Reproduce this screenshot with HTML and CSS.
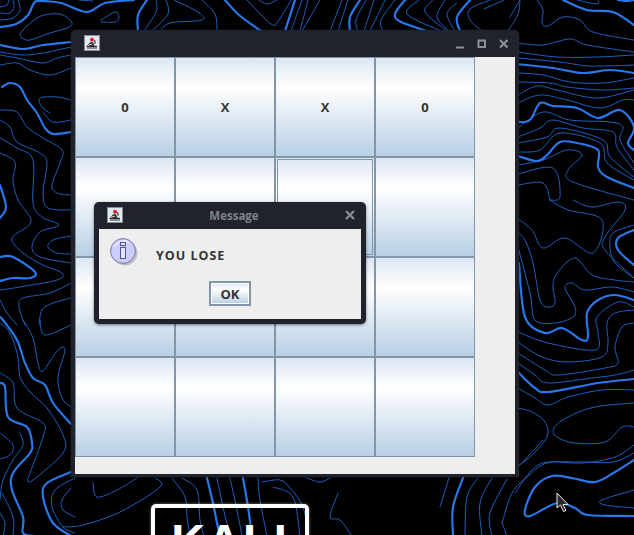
FILE: index.html
```html
<!DOCTYPE html>
<html lang="en">
<head>
    <meta charset="UTF-8">
    <meta name="viewport" content="width=device-width, initial-scale=1.0">
    <title>Tic Tac Toe</title>
    <link rel="stylesheet" href="styles.css">
</head>
<body>

<div class="desktop">
    <svg class="wallpaper" id="wallpaper" width="634" height="535" viewBox="0 0 634 535"></svg>

    <div class="kali-logo">KALI</div>

    <div class="window">
        <div class="titlebar">
            <svg class="java-icon" width="16" height="16" viewBox="0 0 16 16">
                <rect x="0.5" y="0.5" width="15" height="15" fill="#e4e9f0" stroke="#7d90a2"/>
                <path d="M2.500 11.500L6 7.500l2-.5 1.500 1 .5 2.500 3 .5v1.500H3z" fill="#2b2b2b"/>
                <path d="M9.500 4.500l2 1 .5 3-1.500.5z" fill="#666"/>
                <path d="M3 13.500h10" stroke="#8a8a8a"/>
                <path d="M4 10.500l4-1.500" stroke="#ddd"/>
                <circle cx="8" cy="4.800" r="2" fill="#e0202c"/>
            </svg>
            <div class="controls">
                <svg width="53" height="12" viewBox="0 0 53 12">
                    <path d="M0 9.500h8" stroke="#8e8f94" stroke-width="2"/>
                    <rect x="22.500" y="2.500" width="6.500" height="6.500" fill="none" stroke="#8e8f94" stroke-width="2"/>
                    <path d="M44 2l7.500 7.500M51.500 2L44 9.500" stroke="#8e8f94" stroke-width="2.200"/>
                </svg>
            </div>
        </div>
        <div class="content">
            <div class="board">
                <button class="cell">0</button>
                <button class="cell">X</button>
                <button class="cell">X</button>
                <button class="cell">0</button>
                <button class="cell"></button>
                <button class="cell"></button>
                <button class="cell focused"></button>
                <button class="cell"></button>
                <button class="cell"></button>
                <button class="cell"></button>
                <button class="cell"></button>
                <button class="cell"></button>
                <button class="cell"></button>
                <button class="cell"></button>
                <button class="cell"></button>
                <button class="cell"></button>
            </div>
        </div>
    </div>

    <div class="dialog">
        <div class="dialog-title">
            <svg class="java-icon" width="16" height="16" viewBox="0 0 16 16">
                <rect x="0.5" y="0.5" width="15" height="15" fill="#e4e9f0" stroke="#7d90a2"/>
                <path d="M2.500 11.500L6 7.500l2-.5 1.500 1 .5 2.500 3 .5v1.500H3z" fill="#2b2b2b"/>
                <path d="M9.500 4.500l2 1 .5 3-1.500.5z" fill="#666"/>
                <path d="M3 13.500h10" stroke="#8a8a8a"/>
                <path d="M4 10.500l4-1.500" stroke="#ddd"/>
                <circle cx="8" cy="4.800" r="2" fill="#e0202c"/>
            </svg>
            <span class="dialog-name">Message</span>
            <svg class="dialog-close" width="10" height="10" viewBox="0 0 10 10">
                <path d="M1 1l8 8M9 1l-8 8" stroke="#8e8f94" stroke-width="2.200"/>
            </svg>
        </div>
        <div class="dialog-body">
            <div class="message-row">
                <svg class="info-icon" width="30" height="30" viewBox="0 0 30 30">
                    <circle cx="15" cy="15" r="12.500" fill="#888" opacity="0.45"/>
                    <circle cx="13" cy="13" r="12.400" fill="#ccccff" stroke="#7878b0"/>
                    <path d="M5 9a9 9 0 0 1 14-4" fill="none" stroke="#e6e6ff" stroke-width="2"/>
                    <rect x="10.500" y="4.500" width="5" height="3" fill="#e4e4ff" stroke="#5050a0"/>
                    <rect x="10.500" y="9.500" width="5" height="11" fill="#e4e4ff" stroke="#5050a0"/>
                </svg>
                <span class="message">YOU LOSE</span>
            </div>
            <button class="ok-button">OK</button>
        </div>
    </div>

    <svg class="pointer" width="14" height="21" viewBox="0 0 14 21">
        <path d="M1 1v15l3.500-3 3 6.500 2.500-1-3-6h5z" fill="#2a2a2a" stroke="#e8e8e8"/>
    </svg>
</div>

<script src="script.js"></script>

</body>
</html>
```

FILE: styles.css
```css
body {
    margin: 0;
    background: #000;
    overflow: hidden;
    font-family: 'Open Sans', sans-serif;
}
.desktop {
    position: relative;
    width: 634px;
    height: 535px;
    overflow: hidden;
}
.wallpaper {
    position: absolute;
    left: 0;
    top: 0;
}
.wallpaper path {
    fill: none;
    stroke-linecap: round;
}
.wallpaper .thin {
    stroke: #1e5ec0;
    stroke-width: 1;
}
.wallpaper .thick {
    stroke: #2878ec;
    stroke-width: 2.200;
}
.kali-logo {
    position: absolute;
    left: 151px;
    top: 504px;
    width: 150px;
    height: 70px;
    border: 4px solid #fff;
    border-radius: 5px;
    box-shadow: 0 0 3px rgba(255, 255, 255, 0.5);
    color: #fff;
    font-family: 'Liberation Sans', sans-serif;
    font-weight: bold;
    font-size: 47px;
    line-height: 54px;
    letter-spacing: 2px;
    text-align: center;
    padding-top: 6px;
    box-sizing: content-box;
}
.window {
    position: absolute;
    left: 71px;
    top: 30px;
    width: 440px;
    padding: 0 4px 3px;
    background: #20232b;
    border-radius: 5px 5px 0 0;
    box-shadow: 0 0 2px rgba(40, 44, 54, 0.8);
}
.titlebar {
    display: flex;
    align-items: center;
    justify-content: space-between;
    height: 27px;
    padding: 0 6px 2px 9px;
    box-sizing: border-box;
}
.java-icon {
    display: block;
}
.controls {
    margin-top: 2px;
}
.controls svg {
    display: block;
}
.content {
    height: 417px;
    background: #eee;
}
.board {
    display: grid;
    grid-template-columns: repeat(4, 100px);
    grid-template-rows: repeat(4, 100px);
    width: 400px;
}
.cell {
    margin: 0;
    padding: 0;
    border: 1px solid #8296a8;
    background: linear-gradient(#dde6f3 0%, #fff 30%, #b8cfe5 100%);
    color: #333;
    font-family: 'Open Sans', sans-serif;
    font-weight: bold;
    font-size: 13px;
}
.focused {
    outline: 1px solid #8296a8;
    outline-offset: -3px;
}
.dialog {
    position: absolute;
    left: 94px;
    top: 202px;
    width: 262px;
    padding: 0 5px 5px;
    background: #20232b;
    border-radius: 5px;
    box-shadow: 0 1px 3px rgba(0, 0, 0, 0.5);
}
.dialog-title {
    display: flex;
    align-items: center;
    height: 27px;
    padding: 0 6px 2px 8px;
    box-sizing: border-box;
}
.dialog-name {
    flex: 1;
    text-align: center;
    color: #7e838c;
    font-weight: bold;
    font-size: 11.500px;
    padding-top: 1px;
}
.dialog-body {
    height: 90px;
    background: #eee;
    display: flex;
    flex-direction: column;
    align-items: center;
}
.message-row {
    align-self: stretch;
    display: flex;
    align-items: center;
    gap: 16px;
    height: 52px;
    padding-left: 11px;
}
.info-icon {
    margin-top: -4px;
}
.message {
    color: #333;
    font-weight: bold;
    font-size: 12.500px;
    letter-spacing: 1px;
}
.ok-button {
    width: 42px;
    height: 25px;
    padding: 0;
    border: 2px solid #8296a8;
    box-shadow: inset 0 0 0 1px #fff;
    background: linear-gradient(#dde6f3 0%, #fff 30%, #b8cfe5 100%);
    color: #333;
    font-family: 'Open Sans', sans-serif;
    font-weight: bold;
    font-size: 13px;
}
.pointer {
    position: absolute;
    left: 556px;
    top: 492px;
}
```

FILE: script.js
```js
// contour lines of the wallpaper, as [x, y] pairs in a flat list
const thick = [
    [0,27, 16,24, 28,15, 34,3, 40,1, 61,3, 87,12, 105,3, 134,0],
    [0,45, 23,49, 43,45, 71,42],
    [2,87, 10,83, 20,87, 27,100, 37,113, 45,128, 53,134, 71,132],
    [0,185, 6,207, 0,218],
    [0,257, 13,257, 35,272, 30,278, 13,278, 0,281],
    [0,317, 3,320, 17,340, 25,363, 33,378, 45,385, 53,403, 71,424],
    [0,383, 5,387, 8,417, 27,427, 32,443, 30,453, 13,473, 12,490, 23,517, 23,533, 35,536],
    [71,472, 47,483, 43,497, 53,523, 71,536],
    [147,0, 138,15, 138,31],
    [225,0, 239,15, 261,31],
    [295,0, 285,31],
    [360,0, 350,17, 350,31],
    [405,0, 395,14, 401,22, 427,31],
    [470,0, 457,17, 460,31],
    [563,0, 587,10, 613,12, 634,25],
    [618,0, 627,1, 634,0],
    [518,64, 553,68, 583,73, 610,70, 634,73],
    [518,122, 530,120, 540,103, 553,106, 577,108, 598,118, 620,110, 634,127, 628,143, 634,150],
    [518,156, 537,161, 547,155, 560,142, 577,143, 598,150, 598,167, 607,177, 634,188],
    [634,230, 618,238, 618,250, 634,265],
    [519,263, 525,317, 545,333, 562,328, 582,340, 588,337, 587,313, 598,300, 615,295, 634,300],
    [518,372, 535,388, 548,392, 598,383, 634,379],
    [634,460, 615,472, 595,482, 572,478, 552,476, 535,487, 525,510, 530,516, 557,503, 575,508, 588,515, 634,516],
    [207,478, 213,503, 217,523, 220,536],
    [243,478, 248,507, 252,536],
    [463,478, 453,507, 453,536]
];

const thin = [
    [0,20, 13,18, 20,10, 18,0],
    [0,13, 10,13, 14,7, 13,0],
    [0,7, 7,5, 9,0],
    [20,35, 23,30, 37,18, 50,14, 63,15, 72,23, 67,28, 50,33, 30,40, 22,38, 20,35],
    [101,20, 115,12, 119,17, 115,22, 101,22],
    [79,0, 93,1],
    [0,52, 23,55, 43,53, 57,50, 71,47],
    [0,55, 17,58, 43,63, 57,58, 71,55],
    [0,65, 17,63, 30,70, 50,75, 71,68],
    [71,100, 57,97, 40,98, 42,107, 50,113],
    [43,112, 53,122, 71,120],
    [0,110, 17,112, 27,127, 43,138, 62,150, 60,163, 52,185, 57,193, 71,195],
    [0,120, 10,127, 17,142, 40,153, 47,163, 43,193, 48,208, 71,210],
    [0,138, 17,148, 33,160, 33,203, 42,217, 59,225, 40,232, 32,247, 40,257, 71,263],
    [0,153, 15,162, 13,180, 18,200, 31,222, 12,238, 23,253, 43,265, 62,273, 57,280, 20,287, 0,290],
    [71,236, 53,240, 48,247, 57,253, 71,254],
    [25,325, 19,307, 23,298, 50,293, 71,283],
    [39,325, 42,310, 53,303, 71,298],
    [0,300, 7,313, 17,325],
    [0,323, 10,333, 18,357, 20,377, 30,392, 47,408, 63,435, 63,453, 33,480, 28,480, 30,473, 43,437, 43,423, 17,408, 13,383, 0,373],
    [23,320, 33,338, 38,363, 43,371, 58,350, 65,350, 58,377, 62,398, 71,407],
    [40,320, 45,335, 71,325],
    [0,433, 13,445, 10,455, 0,459],
    [20,433, 23,445, 13,460, 3,480, 0,500],
    [0,513, 5,523, 3,536],
    [2,493, 13,517, 13,536],
    [71,488, 62,500, 63,510, 75,517],
    [75,478, 55,490, 52,507, 63,527, 75,533],
    [93,483, 97,497, 117,490, 137,478],
    [63,527, 83,525, 120,512, 160,487, 155,478],
    [172,478, 185,497, 187,517, 190,536],
    [182,478, 197,490, 200,520, 204,536],
    [217,478, 223,507, 230,536],
    [230,478, 237,510, 242,536],
    [258,478, 260,500, 267,536],
    [273,487, 293,497, 300,536],
    [262,482, 280,480, 290,488, 303,507, 308,536],
    [307,478, 320,482, 330,478],
    [338,493, 330,517, 340,520, 352,536],
    [449,478, 440,507],
    [478,478, 467,497, 465,536],
    [492,478, 480,503, 482,536],
    [507,479, 490,513, 492,536],
    [156,0, 156,12, 144,31],
    [166,0, 168,14, 152,31],
    [174,0, 198,12, 202,20, 170,23, 160,31],
    [202,0, 215,14, 217,31],
    [247,0, 271,24, 279,20, 291,0],
    [259,0, 267,4, 277,0],
    [302,0, 291,31],
    [308,0, 300,31],
    [320,0, 302,31],
    [342,0, 330,31],
    [348,0, 338,31],
    [366,0, 356,20, 358,31],
    [374,0, 364,31],
    [385,0, 370,31],
    [395,0, 381,20, 383,31],
    [419,0, 407,14, 441,31],
    [433,0, 425,12, 447,31],
    [445,0, 437,17, 449,31],
    [457,3, 447,14, 455,31],
    [490,0, 470,9, 470,20, 482,31],
    [504,0, 484,9],
    [520,0, 518,14, 508,31],
    [510,17, 520,0],
    [537,0, 543,10, 542,23, 548,26, 563,17, 580,20, 593,32, 634,40],
    [577,0, 597,4, 598,0],
    [518,43, 543,45, 570,39, 587,45, 634,52],
    [518,52, 557,57, 597,57, 634,55],
    [518,58, 560,62, 590,66, 634,65],
    [518,73, 543,75, 570,82, 603,83, 634,78],
    [518,82, 550,83, 567,87, 603,90, 634,88],
    [518,95, 537,86, 557,90, 597,98, 634,90],
    [518,103, 540,95, 567,100, 600,108, 623,100, 634,100],
    [518,128, 543,112, 570,120, 610,122, 623,127, 620,140, 634,163],
    [518,137, 540,128, 553,120, 583,128, 613,132, 617,147, 634,170],
    [518,143, 547,137, 560,128, 603,140, 610,157, 634,177],
    [518,152, 540,150, 560,133, 600,143, 607,163, 634,180],
    [518,165, 543,160, 567,150, 582,155, 568,170, 573,182, 634,200],
    [518,174, 553,168, 560,197, 550,200],
    [518,185, 543,183, 550,200],
    [518,219, 532,230, 543,248, 565,238, 593,253, 602,220, 568,210, 550,200],
    [573,200, 592,207, 618,202, 625,210, 605,237, 605,250, 634,278],
    [518,233, 525,240, 533,263, 540,300, 548,307, 555,303, 553,285, 558,272, 575,258, 592,275, 615,280, 634,282],
    [518,247, 530,293, 535,320, 555,323, 573,317, 575,307, 565,288, 572,283, 585,290, 612,287, 634,292],
    [634,225, 613,233, 610,247, 615,263, 634,278],
    [518,332, 548,343, 595,350, 598,333, 597,317, 618,302, 634,307],
    [518,342, 542,357, 568,362, 602,357, 608,343, 607,323, 615,313, 634,310],
    [518,353, 545,370, 558,375, 605,368, 618,363, 615,347, 622,327, 634,323],
    [518,363, 535,375, 548,383, 592,378, 615,375, 634,370],
    [518,388, 535,398, 548,405, 568,397, 602,390, 634,390],
    [518,408, 532,412, 545,422, 547,437, 532,455, 518,466],
    [634,427, 622,427, 605,442, 575,443, 557,437, 554,428, 568,417, 595,407, 634,403],
    [634,445, 615,457, 582,463, 548,462, 532,470, 515,493],
    [634,490, 602,500, 605,505, 634,508],
    [520,465, 543,440],
    [502,523, 512,493, 527,477, 547,463, 580,462, 613,462, 634,453],
    [502,523, 507,536]
];

// catmull-rom through the points, so the lines come out round
function smoothPath(list) {
    const pts = [];
    for (let i = 0; i < list.length; i += 2) {
        pts.push([list[i], list[i + 1]]);
    }
    let d = `M${pts[0][0]} ${pts[0][1]}`;
    for (let i = 0; i < pts.length - 1; i++) {
        const p0 = pts[Math.max(i - 1, 0)];
        const p1 = pts[i];
        const p2 = pts[i + 1];
        const p3 = pts[Math.min(i + 2, pts.length - 1)];
        const c1x = p1[0] + (p2[0] - p0[0]) / 6;
        const c1y = p1[1] + (p2[1] - p0[1]) / 6;
        const c2x = p2[0] - (p3[0] - p1[0]) / 6;
        const c2y = p2[1] - (p3[1] - p1[1]) / 6;
        d += `C${c1x.toFixed(1)} ${c1y.toFixed(1)} ${c2x.toFixed(1)} ${c2y.toFixed(1)} ${p2[0]} ${p2[1]}`;
    }
    return d;
}

function addLines(lines, className) {
    const svg = document.getElementById('wallpaper');
    lines.forEach(function (line) {
        const path = document.createElementNS('http://www.w3.org/2000/svg', 'path');
        path.setAttribute('d', smoothPath(line));
        path.setAttribute('class', className);
        svg.appendChild(path);
    });
}

addLines(thin, 'thin');
addLines(thick, 'thick');
```
